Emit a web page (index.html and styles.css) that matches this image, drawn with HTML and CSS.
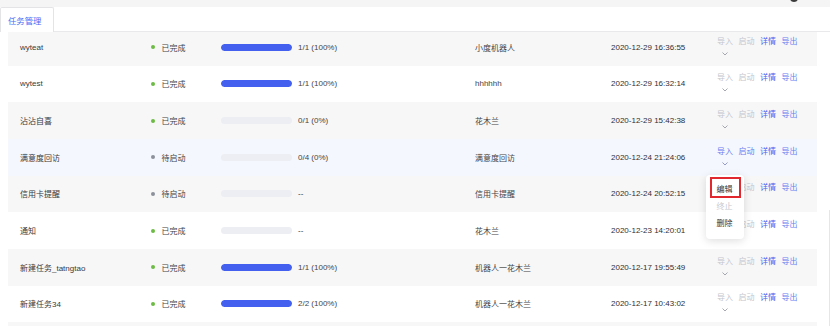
FILE: index.html
```html
<!DOCTYPE html>
<html lang="zh-CN">
<head>
<meta charset="utf-8">
<title>任务管理</title>
<link rel="stylesheet" href="styles.css">
</head>
<body>
<div class="topbar"><span class="avatar"></span></div>
<div class="tabbar"><div class="tab">任务管理</div></div>
<div class="table-wrap">
  <div class="table">
    <div class="row alt">
      <div class="c-name">wyteat</div>
      <div class="c-status"><i class="dot ok"></i>已完成</div>
      <div class="c-prog"><span class="bar"><span class="fill" style="width:100%"></span></span><span class="ptxt">1/1 (100%)</span></div>
      <div class="c-robot">小度机器人</div>
      <div class="c-date">2020-12-29 16:36:55</div>
      <div class="c-act"><span class="drop"><span class="off">导入</span><span class="chev"><svg width="6" height="4" viewBox="0 0 6 4"><polyline points="0.5,0.5 3,3 5.5,0.5" fill="none" stroke="#8e929c" stroke-width="0.8"/></svg></span></span><span class="off">启动</span><span class="lnk">详情</span><span class="lnk2">导出</span></div>
    </div>
    <div class="row">
      <div class="c-name">wytest</div>
      <div class="c-status"><i class="dot ok"></i>已完成</div>
      <div class="c-prog"><span class="bar"><span class="fill" style="width:100%"></span></span><span class="ptxt">1/1 (100%)</span></div>
      <div class="c-robot">hhhhhh</div>
      <div class="c-date">2020-12-29 16:32:14</div>
      <div class="c-act"><span class="drop"><span class="off">导入</span><span class="chev"><svg width="6" height="4" viewBox="0 0 6 4"><polyline points="0.5,0.5 3,3 5.5,0.5" fill="none" stroke="#8e929c" stroke-width="0.8"/></svg></span></span><span class="off">启动</span><span class="lnk">详情</span><span class="lnk2">导出</span></div>
    </div>
    <div class="row alt">
      <div class="c-name">沾沾自喜</div>
      <div class="c-status"><i class="dot ok"></i>已完成</div>
      <div class="c-prog"><span class="bar"><span class="fill" style="width:0%"></span></span><span class="ptxt">0/1 (0%)</span></div>
      <div class="c-robot">花木兰</div>
      <div class="c-date">2020-12-29 15:42:38</div>
      <div class="c-act"><span class="drop"><span class="off">导入</span><span class="chev"><svg width="6" height="4" viewBox="0 0 6 4"><polyline points="0.5,0.5 3,3 5.5,0.5" fill="none" stroke="#8e929c" stroke-width="0.8"/></svg></span></span><span class="off">启动</span><span class="lnk">详情</span><span class="lnk2">导出</span></div>
    </div>
    <div class="row hover">
      <div class="c-name">满意度回访</div>
      <div class="c-status"><i class="dot wait"></i>待启动</div>
      <div class="c-prog"><span class="bar"><span class="fill" style="width:0%"></span></span><span class="ptxt">0/4 (0%)</span></div>
      <div class="c-robot">满意度回访</div>
      <div class="c-date">2020-12-24 21:24:06</div>
      <div class="c-act"><span class="drop"><span class="lnk2">导入</span><span class="chev"><svg width="6" height="4" viewBox="0 0 6 4"><polyline points="0.5,0.5 3,3 5.5,0.5" fill="none" stroke="#7a84b8" stroke-width="0.8"/></svg></span></span><span class="lnk2">启动</span><span class="lnk">详情</span><span class="lnk2">导出</span></div>
    </div>
    <div class="row alt">
      <div class="c-name">信用卡提醒</div>
      <div class="c-status"><i class="dot wait"></i>待启动</div>
      <div class="c-prog"><span class="bar"><span class="fill" style="width:0%"></span></span><span class="ptxt dash">--</span></div>
      <div class="c-robot">信用卡提醒</div>
      <div class="c-date">2020-12-24 20:52:15</div>
      <div class="c-act"><span class="drop"><span class="off">导入</span><span class="chev"><svg width="6" height="4" viewBox="0 0 6 4"><polyline points="0.5,0.5 3,3 5.5,0.5" fill="none" stroke="#8e929c" stroke-width="0.8"/></svg></span></span><span class="off">启动</span><span class="lnk">详情</span><span class="lnk2">导出</span></div>
    </div>
    <div class="row">
      <div class="c-name">通知</div>
      <div class="c-status"><i class="dot ok"></i>已完成</div>
      <div class="c-prog"><span class="bar"><span class="fill" style="width:0%"></span></span><span class="ptxt dash">--</span></div>
      <div class="c-robot">花木兰</div>
      <div class="c-date">2020-12-23 14:20:01</div>
      <div class="c-act"><span class="drop"><span class="off">导入</span><span class="chev"><svg width="6" height="4" viewBox="0 0 6 4"><polyline points="0.5,0.5 3,3 5.5,0.5" fill="none" stroke="#8e929c" stroke-width="0.8"/></svg></span></span><span class="off">启动</span><span class="lnk">详情</span><span class="lnk2">导出</span></div>
    </div>
    <div class="row alt">
      <div class="c-name">新建任务_tatngtao</div>
      <div class="c-status"><i class="dot ok"></i>已完成</div>
      <div class="c-prog"><span class="bar"><span class="fill" style="width:100%"></span></span><span class="ptxt">1/1 (100%)</span></div>
      <div class="c-robot">机器人一花木兰</div>
      <div class="c-date">2020-12-17 19:55:49</div>
      <div class="c-act"><span class="drop"><span class="off">导入</span><span class="chev"><svg width="6" height="4" viewBox="0 0 6 4"><polyline points="0.5,0.5 3,3 5.5,0.5" fill="none" stroke="#8e929c" stroke-width="0.8"/></svg></span></span><span class="off">启动</span><span class="lnk">详情</span><span class="lnk2">导出</span></div>
    </div>
    <div class="row">
      <div class="c-name">新建任务34</div>
      <div class="c-status"><i class="dot ok"></i>已完成</div>
      <div class="c-prog"><span class="bar"><span class="fill" style="width:100%"></span></span><span class="ptxt">2/2 (100%)</span></div>
      <div class="c-robot">机器人一花木兰</div>
      <div class="c-date">2020-12-17 10:43:02</div>
      <div class="c-act"><span class="drop"><span class="off">导入</span><span class="chev"><svg width="6" height="4" viewBox="0 0 6 4"><polyline points="0.5,0.5 3,3 5.5,0.5" fill="none" stroke="#8e929c" stroke-width="0.8"/></svg></span></span><span class="off">启动</span><span class="lnk">详情</span><span class="lnk2">导出</span></div>
    </div>
    <div class="row alt"></div>
  </div>
</div>
<div class="dropdown">
  <div class="item">编辑</div>
  <div class="item disabled">终止</div>
  <div class="item">删除</div>
  <span class="mark"></span>
</div>
<span class="edge"></span>
</body>
</html>
```
FILE: styles.css
```css
* { box-sizing: border-box; }
body {
  margin: 0;
  width: 830px;
  height: 326px;
  overflow: hidden;
  position: relative;
  background: #fff;
  font-family: "Liberation Sans", "Noto Sans CJK SC", sans-serif;
  font-size: 8px;
  color: #3a3a3a;
}
.topbar {
  height: 7px;
  background: #f5f5f6;
  position: relative;
}
.avatar {
  position: absolute;
  left: 790px;
  top: -6px;
  width: 8px;
  height: 8px;
  border-radius: 50%;
  background: #3a3a3a;
}
.tabbar {
  height: 25px;
  border-bottom: 1px solid #e9e9ec;
  display: flex;
}
.tab {
  width: 54px;
  height: 25px;
  margin-bottom: -1px;
  background: #fff;
  border: 1px solid #e4e4e7;
  border-bottom: none;
  border-radius: 2px 2px 0 0;
  padding-left: 7px;
  display: flex;
  align-items: center;
  color: #4a6cf5;
  font-size: 8.4px;
}
.table-wrap {
  margin-left: 8px;
  width: 809px;
  height: 294px;
  overflow: hidden;
}
.table { margin-top: -3px; }
.row {
  height: 36.67px;
  display: grid;
  grid-template-columns: 131px 70px 254px 136px 106px 1fr;
  align-items: center;
  padding-left: 12px;
  background: #fff;
}
.row.alt { background: #f7f7f8; }
.row.hover { background: #f5f7fe; }
.c-status { display: flex; align-items: center; color: #444; }
.dot {
  width: 4px;
  height: 4px;
  border-radius: 50%;
  margin-right: 6.5px;
}
.dot.ok { background: #6dbb45; }
.dot.wait { background: #8c909a; }
.c-prog { display: flex; align-items: center; }
.bar {
  width: 71px;
  height: 7px;
  border-radius: 4px;
  background: #eceef3;
  overflow: hidden;
  display: block;
}
.fill {
  display: block;
  height: 100%;
  background: #4361ee;
  border-radius: 4px;
}
.ptxt { margin-left: 6px; color: #444; }
.ptxt.dash { color: #333; }
.c-robot { color: #444; }
.c-date { color: #2f2f33; }
.c-act {
  display: flex;
  align-items: flex-start;
  gap: 5.5px;
  line-height: 11px;
}
.drop {
  display: flex;
  flex-direction: column;
  align-items: center;
}
.chev {
  height: 12px;
  display: flex;
  align-items: center;
  padding-top: 2px;
}
.off { color: #c3c6ce; }
.lnk { color: #4a62ee; }
.lnk2 { color: #6a7ef0; }
.dropdown {
  position: absolute;
  left: 706px;
  top: 175px;
  width: 38px;
  height: 64px;
  padding-top: 6px;
  background: #fff;
  border-radius: 4px;
  box-shadow: 0 2px 8px rgba(0, 0, 0, 0.13);
}
.item {
  height: 17px;
  line-height: 17px;
  padding-left: 10.5px;
  color: #333;
}
.item.disabled { color: #c5c8cf; }
.mark {
  position: absolute;
  left: 4px;
  top: 2px;
  width: 31px;
  height: 21px;
  border: 2px solid #e0282e;
}
.edge {
  position: absolute;
  left: 829px;
  top: 210px;
  width: 1px;
  height: 116px;
  background: #e6e6e8;
}
```
